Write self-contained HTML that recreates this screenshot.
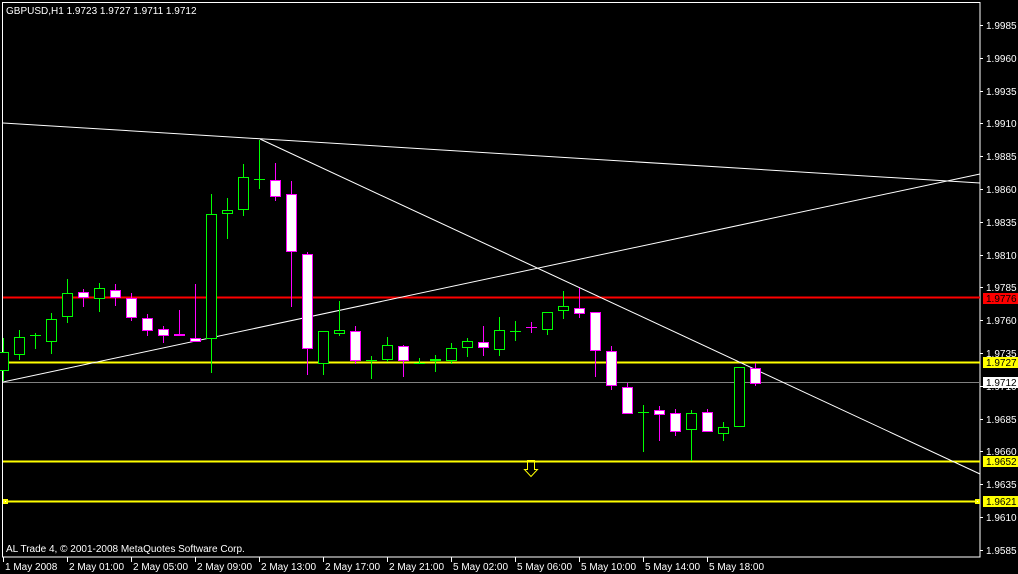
<!DOCTYPE html>
<html><head><meta charset="utf-8">
<style>
html,body{margin:0;padding:0;background:#000;width:1018px;height:574px;overflow:hidden}
svg{display:block}
text{font-family:"Liberation Sans",sans-serif;font-size:10px;fill:#fff}
</style></head>
<body>
<svg id="s" width="1018" height="574" xmlns="http://www.w3.org/2000/svg" shape-rendering="crispEdges">
<rect width="1018" height="574" fill="#000"/>
<g id="g"></g>
</svg>
<script>
var NS="http://www.w3.org/2000/svg",g=document.getElementById('g');
function el(t,a,txt){var e=document.createElementNS(NS,t);for(var k in a)e.setAttribute(k,a[k]);if(txt)e.textContent=txt;g.appendChild(e);return e;}
el('rect',{x:2.5,y:2.5,width:977.5,height:554.5,fill:'none',stroke:'#fff','stroke-width':1});
el('line',{x1:3,y1:297.5,x2:980,y2:297.5,stroke:'#f00','stroke-width':2});
el('line',{x1:3,y1:362.5,x2:980,y2:362.5,stroke:'#ff0','stroke-width':2});
el('line',{x1:3,y1:382.5,x2:980,y2:382.5,stroke:'#808080','stroke-width':1});
el('line',{x1:3,y1:461.5,x2:980,y2:461.5,stroke:'#ff0','stroke-width':2});
el('line',{x1:3,y1:501.5,x2:980,y2:501.5,stroke:'#ff0','stroke-width':2});
el('rect',{x:3,y:499,width:5,height:5,fill:'#ff0'});
el('rect',{x:975,y:499,width:5,height:5,fill:'#ff0'});
el('rect',{x:5,y:501,width:1,height:1,fill:'#fff'});
el('rect',{x:977,y:501,width:1,height:1,fill:'#fff'});
var tl={stroke:'#fff','stroke-width':1,'shape-rendering':'auto'};
function ln(a,b,c,d){var o={x1:a,y1:b,x2:c,y2:d};for(var k in tl)o[k]=tl[k];el('line',o);}
ln(3,123,980,183);
ln(3,382,980,174);
ln(260,139,980,474);
el('path',{d:'M527.5 460.5 H534.5 V469.5 H537.5 L531 476.5 L524.5 469.5 H527.5 Z',fill:'none',stroke:'#ff0','stroke-width':1,'shape-rendering':'auto'});
var C=[[3,'g',352,370,338,380],[19,'g',337,354,330,359],[35,'g',335,335,333,348],[51,'g',319,341,313,353],[67,'g',293,316,279,322],
[83,'m',292,297,289,306],[99,'g',288,298,283,311],[115,'m',290,297,284,305],[131,'m',298,317,293,320],[147,'m',318,330,314,335],
[163,'m',329,335,326,342],[179,'m',334,335,310,335],[195,'m',338,341,284,341],[211,'g',214,338,194,372],[227,'g',210,213,198,238],
[243,'g',177,209,164,215],[259,'g',179,179,140,188],[275,'m',180,196,163,200],[291,'m',194,251,181,306],[307,'m',254,348,252,374],
[323,'g',331,363,331,374],[339,'g',330,333,301,335],[355,'m',331,360,326,363],[371,'g',360,360,356,378],[387,'g',345,359,337,361],
[403,'m',346,360,345,376],[419,'g',363,363,358,363],[435,'g',359,360,355,371],[451,'g',348,360,343,363],[467,'g',341,347,338,356],
[483,'m',342,347,326,355],[499,'g',330,349,317,355],[515,'g',331,331,321,340],[531,'m',327,327,322,332],[547,'g',312,329,312,334],
[563,'g',306,310,291,318],[579,'m',308,313,288,317],[595,'m',312,350,312,376],[611,'m',351,385,346,389],[627,'m',387,413,383,413],
[643,'g',412,412,405,451],[659,'m',410,414,406,440],[675,'m',413,431,409,435],[691,'g',413,429,410,460],[707,'m',412,431,409,431],
[723,'g',427,433,422,440],[739,'g',367,426,367,426],[755,'m',368,383,363,385]];
C.forEach(function(c){
 var col=c[1]=='g'?'#0f0':'#f0f';
 el('rect',{x:c[0],y:c[4],width:1,height:c[5]-c[4]+1,fill:col});
 if(c[3]-c[2]<1){el('rect',{x:c[0]-5,y:c[2],width:11,height:1,fill:col});}
 else el('rect',{x:c[0]-4.5,y:c[2]+0.5,width:10,height:c[3]-c[2],fill:c[1]=='g'?'#000':'#fff',stroke:col,'stroke-width':1});
});
for(var k=0;k<17;k++){var p=(1.9985-k*0.0025).toFixed(4),y=Math.round(25+k*32.8);
 el('rect',{x:980,y:y,width:3,height:1,fill:'#fff'});
 el('text',{x:986,y:y+4},p);}
function tag(y,txt,bg,fg){el('rect',{x:983,y:y-5,width:35,height:11,fill:bg});el('text',{x:986,y:y+4,style:'fill:'+fg},txt);}
tag(298,'1.9776','#f00','#000');
tag(362,'1.9727','#ff0','#000');
tag(382,'1.9712','#fff','#000');
tag(461,'1.9652','#ff0','#000');
tag(501,'1.9621','#ff0','#000');
var D=['1 May 2008','2 May 01:00','2 May 05:00','2 May 09:00','2 May 13:00','2 May 17:00','2 May 21:00','5 May 02:00','5 May 06:00','5 May 10:00','5 May 14:00','5 May 18:00'];
D.forEach(function(d,i){var x=3+i*64;el('rect',{x:x,y:557,width:1,height:5,fill:'#fff'});el('text',{x:x+2,y:570},d);});
el('text',{x:6,y:552},'AL Trade 4, \u00a9 2001-2008 MetaQuotes Software Corp.');
el('text',{x:6,y:14},'GBPUSD,H1  1.9723 1.9727 1.9711 1.9712');
</script>
</body></html>
